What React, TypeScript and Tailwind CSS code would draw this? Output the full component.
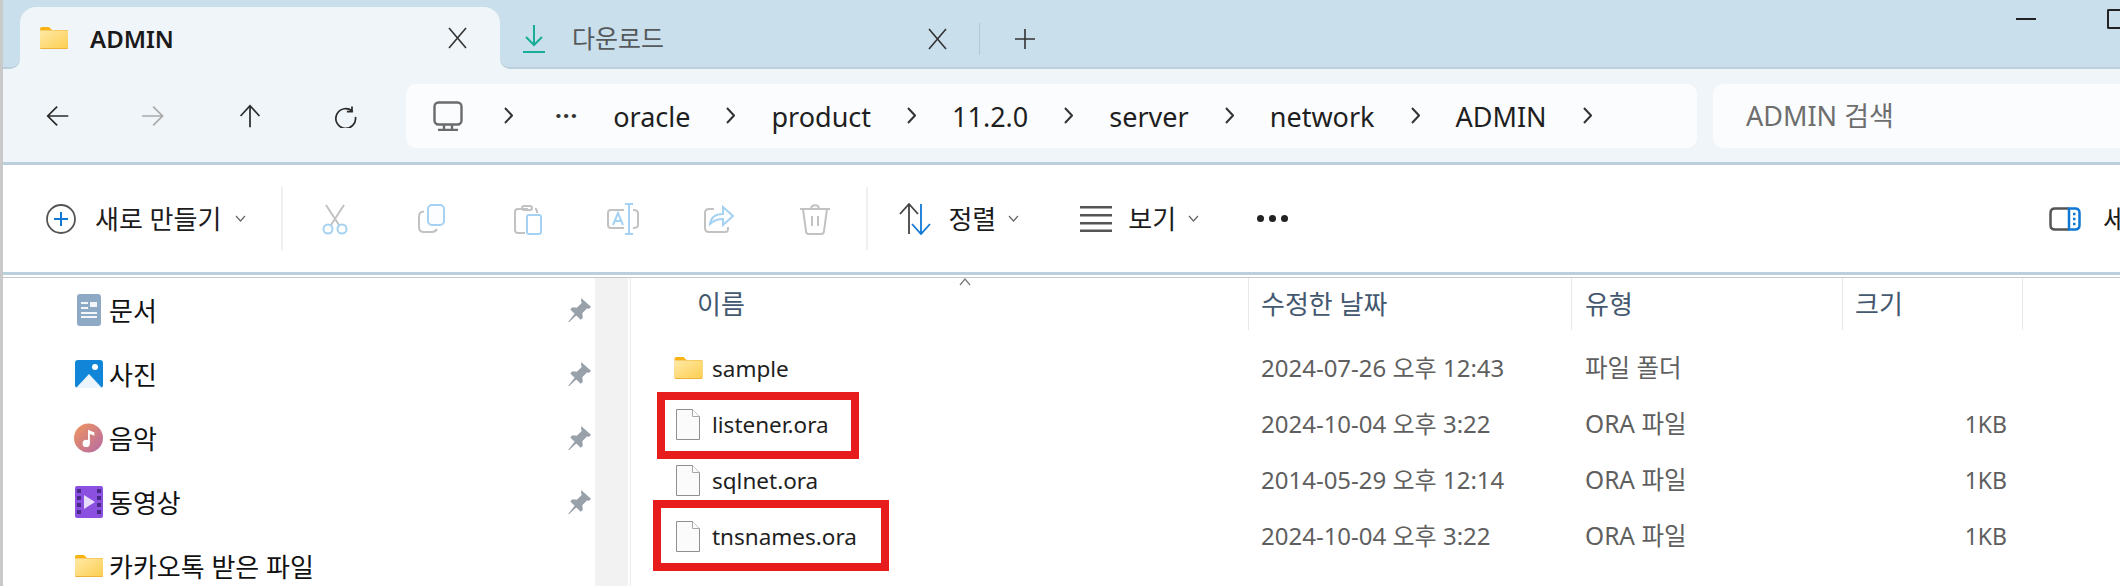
import type { ReactNode } from "react";

const gray = "#c2c2c2";
const sky = "#a5d1f2";

function Folder({ className }: { className: string }) {
  return (
    <svg viewBox="0 0 28 22" className={className}>
      <defs>
        <linearGradient id="fold" x1="0" y1="0" x2="1" y2="1">
          <stop offset="0" stopColor="#ffe9a6" />
          <stop offset="1" stopColor="#fccf52" />
        </linearGradient>
      </defs>
      <path d="M0 2a2 2 0 0 1 2-2h7l3 3h-12z" fill="#fbb314" />
      <rect x="0" y="3" width="28" height="19" rx="1" fill="#f0b33a" />
      <rect x="0" y="3.5" width="28" height="17.5" rx="1" fill="url(#fold)" />
    </svg>
  );
}

function FileIcon() {
  return (
    <svg viewBox="0 0 24 31" className="h-[31px] w-6 shrink-0">
      <path d="M.5.5h16l7 7v23H.5z" fill="#fbfbfb" stroke="#8f8f8f" />
      <path d="M16.5.5v7h7" fill="#fff" stroke="#a8a8a8" />
    </svg>
  );
}

function Line({ d, color = "#2b2b2b", width = 2, size = "h-7 w-7", box = "0 0 28 28" }: { d: string; color?: string; width?: number; size?: string; box?: string }) {
  return (
    <svg viewBox={box} className={`shrink-0 ${size}`} fill="none" stroke={color} strokeWidth={width}>
      <path d={d} />
    </svg>
  );
}

function Chev() {
  return <Line d="M1 1l7 7.5-7 7.5" size="h-[17px] w-[9px]" box="0 0 9 17" color="#333" />;
}

function Down() {
  return <Line d="M1 1l4.5 5 4.5-5" size="h-2 w-[11px]" box="0 0 11 8" color="#666" width={1.2} />;
}

function Close() {
  return <Line d="M1 1l17 20M18 1l-17 20" size="h-[22px] w-[19px]" box="0 0 19 22" color="#333" width={1.6} />;
}

function Pin() {
  return (
    <svg viewBox="0 0 22 22" className="h-6 w-6 shrink-0" fill="#98a1a9">
      <path d="M13 0l9 8-2 2-1.500-.5-4.500 4.500.5 4-2 2-4-4-7 6.500-.5-.5 6-7.500-4-4 2-2 4 .5 4.500-4.500-.5-1.500z" />
    </svg>
  );
}

function Crumb({ children }: { children: ReactNode }) {
  return <span className="mt-[2px] text-[27px] leading-none text-[#1f1f1f]">{children}</span>;
}

function ToolIcon({ children }: { children: ReactNode }) {
  return (
    <div className="flex w-[96px] shrink-0 justify-center">
      <svg viewBox="0 0 32 32" className="h-8 w-8" fill="none" strokeWidth={2}>
        {children}
      </svg>
    </div>
  );
}

function DocIcon() {
  return (
    <svg viewBox="0 0 24 32" className="h-8 w-6">
      <rect width="24" height="32" rx="3" fill="#8ea9c4" />
      <path d="M4 8h7v2H4zM13 8h7v5h-7zM4 13h7v2H4zM4 18h16v2H4zM4 22h16v2H4z" fill="#f2f6fa" />
    </svg>
  );
}

function PhotoIcon() {
  return (
    <svg viewBox="0 0 28 28" className="h-7 w-7">
      <rect width="28" height="28" rx="3" fill="#1185d8" />
      <circle cx="20" cy="7" r="3" fill="#fff" />
      <path d="M1 28l13-14 13 14z" fill="#eaf5fd" />
    </svg>
  );
}

function MusicIcon() {
  return (
    <svg viewBox="0 0 32 32" className="h-8 w-8">
      <defs>
        <linearGradient id="mus" x1="0" y1="0" x2="1" y2="1">
          <stop offset="0" stopColor="#f0965c" />
          <stop offset="1" stopColor="#b56aa6" />
        </linearGradient>
      </defs>
      <circle cx="16" cy="16" r="16" fill="url(#mus)" />
      <circle cx="13.500" cy="22" r="4" fill="#fff" />
      <path d="M15.500 22V7l7 3v3.500l-5-2V22z" fill="#fff" />
    </svg>
  );
}

function VideoIcon() {
  return (
    <svg viewBox="0 0 28 32" className="h-8 w-7">
      <rect width="28" height="32" rx="2" fill="#8b50e0" />
      <path d="M2 3h4v4H2zM2 10h4v4H2zM2 17h4v4H2zM2 24h4v4H2zM22 3h4v4h-4zM22 10h4v4h-4zM22 17h4v4h-4zM22 24h4v4h-4z" fill="#49298a" />
      <path d="M9 9l11 7-11 7z" fill="#e8dcfb" />
    </svg>
  );
}

const side = [
  { name: "문서", icon: <DocIcon />, pin: true },
  { name: "사진", icon: <PhotoIcon />, pin: true },
  { name: "음악", icon: <MusicIcon />, pin: true },
  { name: "동영상", icon: <VideoIcon />, pin: true },
  { name: "카카오톡 받은 파일", icon: <Folder className="h-[22px] w-7" />, pin: false },
];

const files = [
  { name: "sample", date: "2024-07-26 오후 12:43", type: "파일 폴더", size: "" },
  { name: "listener.ora", date: "2024-10-04 오후 3:22", type: "ORA 파일", size: "1KB" },
  { name: "sqlnet.ora", date: "2014-05-29 오후 12:14", type: "ORA 파일", size: "1KB" },
  { name: "tnsnames.ora", date: "2024-10-04 오후 3:22", type: "ORA 파일", size: "1KB" },
];

export default function App() {
  return (
    <div className="relative flex h-[586px] w-[2120px] flex-col overflow-hidden border-l-[3px] border-[#c9c9c9] bg-white font-['Noto_Sans','Noto_Sans_CJK_KR',sans-serif]">
      {/* tabs */}
      <div className="flex h-[69px] shrink-0 bg-[#f0f5f9]">
        <div className="w-[17px] rounded-br-[10px] border-b-2 border-[#bccfdc] bg-[#cadfec]" />
        <div className="w-[480px] bg-[#cadfec] pt-[7px]">
          <div className="flex h-[62px] items-center rounded-t-[16px] bg-[#f0f5f9] pl-5">
            <Folder className="h-[22px] w-7" />
            <span className="ml-[22px] mt-[1px] text-[24px] font-semibold text-[#1a1a1a]">ADMIN</span>
            <div className="ml-auto mr-[33px]">
              <Close />
            </div>
          </div>
        </div>
        <div className="flex flex-1 rounded-bl-[10px] border-b-2 border-[#bccfdc] bg-[#cadfec]">
          <div className="flex h-[67px] items-center pl-[23px] pt-[10px]">
            <svg viewBox="0 0 22 28" className="h-7 w-[22px]" fill="none" stroke="#17ad96" strokeWidth={2}>
              <path d="M11 0v20M3 12l8 8 8-8" />
              <path d="M0 27h22" />
            </svg>
            <span className="ml-[27px] text-[25px] text-[#55595c]">다운로드</span>
            <div className="ml-[264px]">
              <Close />
            </div>
            <div className="ml-[32px] h-8 w-px bg-[#b5c6d2]" />
            <div className="ml-[35px]">
              <Line d="M10 0v20M0 10h20" size="h-5 w-5" box="0 0 20 20" color="#333" width={1.6} />
            </div>
          </div>
          <div className="ml-auto flex items-start pt-[9px]">
            <div className="mt-[9px] h-[2px] w-5 bg-[#222]" />
            <div className="ml-[71px] h-[20px] w-[13px] rounded-l-[2px] border-2 border-r-0 border-[#222]" />
          </div>
        </div>
      </div>

      {/* address row */}
      <div className="flex h-[96px] shrink-0 items-center border-b-[3px] border-[#bccfdc] bg-[#f0f5f9] pl-[43px]">
        <div className="mt-[1px] flex gap-[72px]">
          <Line d="M26 14H3M13 3L2 14l11 11" size="h-6 w-6" />
          <Line d="M0 14h23M13 3l11 11-11 11" size="h-6 w-6" color="#aaa" />
          <Line d="M14 27V3M3 14L14 2l11 12" size="h-6 w-6" />
          <Line d="M21 3v6h-6M22 9a11.500 11.500 0 1 0 3 6" size="h-6 w-6" />
        </div>
        <div className="ml-[48px] flex h-[64px] w-[1291px] items-center rounded-[10px] bg-[#fbfcfe] pl-[27px]">
          <svg viewBox="0 0 30 30" className="h-[30px] w-[30px]" fill="none" stroke="#6b6b6b" strokeWidth={2.400}>
            <rect x="1.500" y="1.500" width="27" height="22" rx="4" />
            <path d="M11 24v4M19 24v4M5 29h20" />
          </svg>
          <div className="ml-[41px]">
            <Chev />
          </div>
          <span className="ml-[42px] mb-[2px] text-[24px] font-bold leading-none tracking-[1px] text-[#333]">···</span>
          <div className="ml-[35px] flex items-center gap-[36px]">
            <Crumb>oracle</Crumb>
            <Chev />
            <Crumb>product</Crumb>
            <Chev />
            <Crumb>11.2.0</Crumb>
            <Chev />
            <Crumb>server</Crumb>
            <Chev />
            <Crumb>network</Crumb>
            <Chev />
            <Crumb>ADMIN</Crumb>
            <Chev />
          </div>
        </div>
        <div className="ml-4 flex h-[64px] flex-1 items-center rounded-l-[10px] bg-[#fbfcfe] pl-[33px] pt-[2px] text-[27px] text-[#6e6e6e]">
          ADMIN 검색
        </div>
      </div>

      {/* toolbar */}
      <div className="flex h-[110px] shrink-0 items-center whitespace-nowrap border-b-[3px] border-[#bccfdc] pl-[43px] [&>*]:shrink-0">
        <svg viewBox="0 0 30 30" className="h-[30px] w-[30px]" fill="none">
          <circle cx="15" cy="15" r="14" stroke="#555" strokeWidth={1.800} />
          <path d="M15 8v14M8 15h14" stroke="#0f78d4" strokeWidth={2} />
        </svg>
        <span className="ml-[19px] text-[26px] leading-none text-[#1c1c1c]">새로 만들기</span>
        <div className="ml-[14px]">
          <Down />
        </div>
        <div className="ml-[35px] h-[63px] w-[2px] bg-[#f0f0f0]" />
        <div className="ml-[4px] flex">
          <ToolIcon>
            <path d="M7 2l13 20M25 2L12 22" stroke={gray} />
            <circle cx="9" cy="26" r="4.500" stroke={sky} />
            <circle cx="23" cy="26" r="4.500" stroke={sky} />
          </ToolIcon>
          <ToolIcon>
            <path d="M9 8.500c-3 0-5 1.500-5 5V24c0 3 2 5 5 5h8c2 0 4-1 5-3" stroke={gray} />
            <rect x="13" y="2" width="16" height="20" rx="4" stroke={sky} fill="#fbfdff" />
          </ToolIcon>
          <ToolIcon>
            <path d="M17 6h-10c-2 0-3 1-3 3v18c0 2 1 3 3 3h7M24 6h1c1 1 1 2 1 3v1" stroke={gray} />
            <rect x="11" y="3" width="10" height="4" rx="2" stroke={gray} />
            <rect x="16" y="12" width="14" height="19" rx="2" stroke={sky} />
          </ToolIcon>
          <ToolIcon>
            <path d="M17 7H4c-2 0-3 1-3 3v12c0 2 1 3 3 3h13M26 7c3 0 5 1 5 3v12c0 2-2 3-5 3" stroke={gray} />
            <path d="M22 1v30M18 1h8M18 31h8M6 22l5-12 5 12M8 18h6" stroke={sky} />
          </ToolIcon>
          <ToolIcon>
            <path d="M11 6H6c-3 0-4 1-4 4v15c0 3 1 4 4 4h16c3 0 3-1 3-5" stroke={gray} />
            <path d="M7 21c1-7 6-10 13-10V4l10 9-10 9v-6c-5 0-9 1-13 5z" stroke={sky} />
          </ToolIcon>
          <ToolIcon>
            <path d="M1 6h30M12 6c0-5 8-5 8 0M4 6l3 22c0 2 1 3 3 3h12c2 0 3-1 3-3l3-22M13 13v10M19 13v10" stroke={gray} />
          </ToolIcon>
        </div>
        <div className="ml-[3px] h-[63px] w-[2px] bg-[#f0f0f0]" />
        <svg viewBox="0 0 36 32" className="ml-[30px] h-8 w-9" fill="none" strokeWidth={1.800}>
          <path d="M11 31V2M2 11l9-10 9 10" stroke="#444" />
          <path d="M23 1v29M14 21l9 10 9-10" stroke="#0f78d4" />
        </svg>
        <span className="ml-[14px] text-[26px] leading-none text-[#1c1c1c]">정렬</span>
        <div className="ml-[12px]">
          <Down />
        </div>
        <svg viewBox="0 0 32 26" className="ml-[61px] h-[26px] w-8" fill="#555">
          <path d="M0 0h32v2.500H0zM0 8h32v2.500H0zM0 16h32v2.500H0zM0 23.500h32V26H0z" />
        </svg>
        <span className="ml-4 text-[26px] leading-none text-[#1c1c1c]">보기</span>
        <div className="ml-[12px]">
          <Down />
        </div>
        <div className="ml-[58px] flex gap-[5px]">
          <span className="h-[7px] w-[7px] rounded-full bg-[#222]" />
          <span className="h-[7px] w-[7px] rounded-full bg-[#222]" />
          <span className="h-[7px] w-[7px] rounded-full bg-[#222]" />
        </div>
        <svg viewBox="0 0 32 24" className="ml-[761px] h-6 w-[32px]" fill="none" strokeWidth={2.500}>
          <path d="M20 1.500H6C3 1.500 1.500 3 1.500 6v12c0 3 1.500 4.500 4.500 4.500h14" stroke="#555" />
          <path d="M20 1.500h6c3 0 4.500 1.500 4.500 4.500v12c0 3-1.500 4.500-4.500 4.500h-6z" stroke="#0f78d4" />
          <path d="M24 7h2.500M24 12h2.500M24 17h2.500" stroke="#0f78d4" />
        </svg>
        <span className="ml-[22px] text-[26px] leading-none text-[#1c1c1c]">세</span>
      </div>

      {/* gap + gray rule */}
      <div className="mt-[2px] h-px shrink-0 bg-[#c8c8c8]" />

      {/* body */}
      <div className="flex flex-1 overflow-hidden">
        <div className="w-[592px] shrink-0">
          {side.map((s) => (
            <div key={s.name} className="flex h-16 items-center pl-[71px] pr-[4px]">
              <div className="flex w-[29px] shrink-0 justify-center">{s.icon}</div>
              <span className="ml-[6px] mt-[1px] flex-1 text-[26px] leading-none text-[#111]">{s.name}</span>
              {s.pin && <Pin />}
            </div>
          ))}
        </div>
        <div className="w-[33px] shrink-0 bg-[#f2f2f2]" />
        <div className="w-[3px] shrink-0 border-r border-[#ececec]" />

        <div className="flex-1">
          <div className="flex h-[52px] text-[26px] text-[#44586f]">
            <div className="relative flex w-[618px] items-center border-r border-[#e8e8e8] pl-[66px]">
              이름
              <div className="absolute left-[328px] top-0">
                <Line d="M1 7l5-6 5 6" size="h-2 w-3" box="0 0 12 8" color="#777" width={1.2} />
              </div>
            </div>
            <div className="flex w-[323px] items-center border-r border-[#e8e8e8] pl-3">수정한 날짜</div>
            <div className="flex w-[271px] items-center border-r border-[#e8e8e8] pl-[13px]">유형</div>
            <div className="flex w-[180px] items-center border-r border-[#e8e8e8] pl-3">크기</div>
          </div>
          <div className="pt-[10px]">
            {files.map((f) => (
              <div key={f.name} className="flex h-14 items-center text-[24px] text-[#5f5f5f]">
                <div className="flex w-[618px] items-center pl-[42px]">
                  <div className="flex w-[30px] justify-center">
                    {f.size ? <FileIcon /> : <Folder className="h-[22px] w-[29px]" />}
                  </div>
                  <span className="ml-[9px] mt-[1px] text-[22.5px] text-[#1f1f1f]">{f.name}</span>
                </div>
                <div className="w-[323px] pl-3">{f.date}</div>
                <div className="w-[271px] pl-[13px] text-[24.5px]">{f.type}</div>
                <div className="w-[164px] text-right text-[23px]">{f.size}</div>
              </div>
            ))}
          </div>
        </div>
      </div>

      {/* red markup boxes drawn on top of the screenshot */}
      <div className="absolute left-[654px] top-[392px] h-[67px] w-[202px] border-[8px] border-[#e71c1c]" />
      <div className="absolute left-[650px] top-[500px] h-[71px] w-[236px] border-[8px] border-[#e71c1c]" />
    </div>
  );
}
